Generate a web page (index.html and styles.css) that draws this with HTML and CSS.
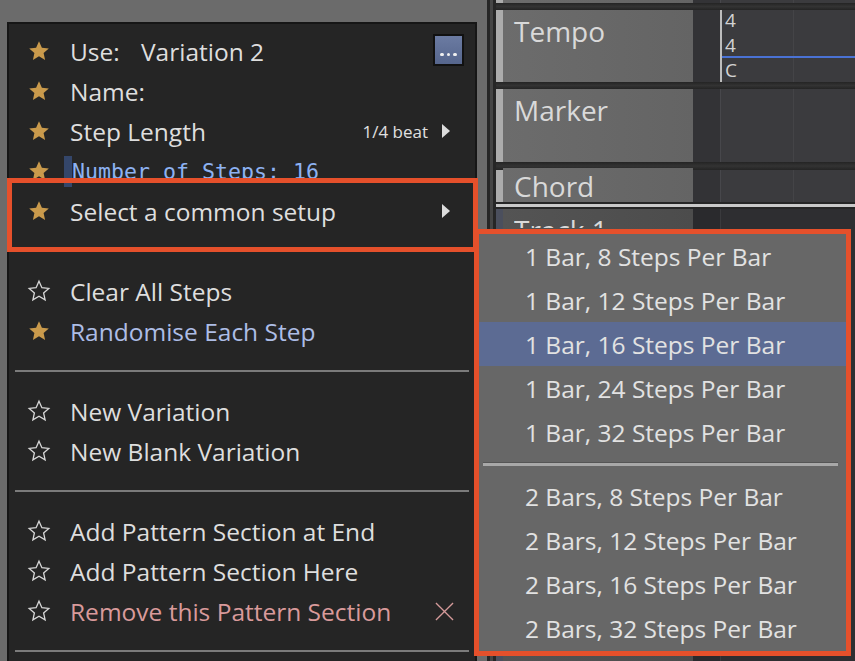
FILE: index.html
```html
<!DOCTYPE html>
<html>
<head>
<meta charset="utf-8">
<link rel="stylesheet" href="styles.css">
</head>
<body>
<svg class="defs" width="0" height="0">
  <symbol id="star" viewBox="0 0 24 24">
    <polygon points="12,2.2 14.9,8.7 21.8,9.4 16.6,14 18.1,20.9 12,17.3 5.9,20.9 7.4,14 2.2,9.4 9.1,8.7"/>
  </symbol>
</svg>

<div class="left">
  <div class="menu">
    <div class="item"><svg class="star full"><use href="#star"/></svg><span class="label-use">Use:</span><span>Variation 2</span><span class="dots-btn"><span class="dot"></span><span class="dot"></span><span class="dot"></span></span></div>
    <div class="item"><svg class="star full"><use href="#star"/></svg><span>Name:</span></div>
    <div class="item"><svg class="star full"><use href="#star"/></svg><span>Step Length</span><span class="value">1/4 beat</span><span class="arrow"></span></div>
    <div class="item"><svg class="star full"><use href="#star"/></svg><span class="cursor"></span><span class="mono">Number of Steps: 16</span></div>
    <div class="item"><svg class="star full"><use href="#star"/></svg><span>Select a common setup</span><span class="arrow push"></span></div>
    <div class="sep"></div>
    <div class="item"><svg class="star empty"><use href="#star"/></svg><span>Clear All Steps</span></div>
    <div class="item accent"><svg class="star full"><use href="#star"/></svg><span>Randomise Each Step</span></div>
    <div class="sep"></div>
    <div class="item"><svg class="star empty"><use href="#star"/></svg><span>New Variation</span></div>
    <div class="item"><svg class="star empty"><use href="#star"/></svg><span>New Blank Variation</span></div>
    <div class="sep"></div>
    <div class="item"><svg class="star empty"><use href="#star"/></svg><span>Add Pattern Section at End</span></div>
    <div class="item"><svg class="star empty"><use href="#star"/></svg><span>Add Pattern Section Here</span></div>
    <div class="item danger"><svg class="star empty"><use href="#star"/></svg><span>Remove this Pattern Section</span><svg class="xicon" viewBox="0 0 20 20"><path d="M1 1 L19 19 M19 1 L1 19"/></svg></div>
    <div class="sep"></div>
  </div>
</div>

<div class="app">
  <div class="gutter"></div>
  <div class="tracks">
    <div class="track stub"><div class="stripe"></div><div class="header"></div><div class="lane"></div></div>
    <div class="hsep"></div>
    <div class="track tempo">
      <div class="stripe"></div>
      <div class="header"><span class="tname">Tempo</span></div>
      <div class="lane"><div class="sig"><div>4</div><div>4</div><div>C</div></div></div>
    </div>
    <div class="hsep"></div>
    <div class="track marker">
      <div class="stripe"></div>
      <div class="header"><span class="tname">Marker</span></div>
      <div class="lane grid"></div>
    </div>
    <div class="hsep wide"></div>
    <div class="track chord">
      <div class="stripe"></div>
      <div class="header"><span class="tname">Chord</span></div>
      <div class="lane grid"></div>
    </div>
    <div class="divider"></div>
    <div class="track t1">
      <div class="stripe"></div>
      <div class="header"><span class="tname clip">Track 1</span></div>
      <div class="lane grid"></div>
    </div>
  </div>
</div>

<div class="submenu">
  <div class="sitem">1 Bar, 8 Steps Per Bar</div>
  <div class="sitem">1 Bar, 12 Steps Per Bar</div>
  <div class="sitem active">1 Bar, 16 Steps Per Bar</div>
  <div class="sitem">1 Bar, 24 Steps Per Bar</div>
  <div class="sitem">1 Bar, 32 Steps Per Bar</div>
  <div class="ssep"></div>
  <div class="sitem">2 Bars, 8 Steps Per Bar</div>
  <div class="sitem">2 Bars, 12 Steps Per Bar</div>
  <div class="sitem">2 Bars, 16 Steps Per Bar</div>
  <div class="sitem">2 Bars, 32 Steps Per Bar</div>
</div>

<div class="mark mark-item"></div>
<div class="mark mark-sub"></div>
</body>
</html>
```

FILE: styles.css
```css
* { box-sizing: border-box; }
html, body { margin: 0; padding: 0; }
body {
  width: 855px;
  height: 661px;
  overflow: hidden;
  position: relative;
  display: flex;
  background: #6b6b6b;
  font-family: "Open Sans", "Noto Sans", sans-serif;
}
.defs { position: absolute; }

/* ---------- left: popup menu ---------- */
.left {
  width: 487px;
  flex: none;
  height: 661px;
  overflow: hidden;
  padding: 22px 0 0 7px;
}
.menu {
  width: 470px;
  height: 700px;
  border: 2px solid #161616;
  background: #252525;
  padding-top: 7px;
}
.item {
  height: 40px;
  display: flex;
  align-items: center;
  padding-left: 18px;
  font-size: 24.5px;
  color: #dedede;
  white-space: nowrap;
}
.star { width: 24px; height: 24px; flex: none; margin-right: 19px; margin-top: -1px; }
.star.full { fill: #c99a4c; }
.star.empty { fill: none; stroke: #d8d8d8; stroke-width: 1.3; stroke-linejoin: miter; }
.label-use { width: 71px; }
.dots-btn {
  margin-left: auto;
  margin-right: 11px;
  width: 31px;
  height: 32px;
  border: 2px solid #111;
  background: linear-gradient(#6b7ba2, #56668d);
  display: flex;
  align-items: flex-end;
  justify-content: center;
  gap: 3px;
  padding-bottom: 8px;
  margin-top: -2px;
}
.dot { width: 3.5px; height: 3.5px; border-radius: 50%; background: #f0f0f0; }
.value { margin-left: auto; font-size: 17px; color: #e0e0e0; }
.arrow {
  width: 0; height: 0;
  border-left: 8px solid #dcdcdc;
  border-top: 7px solid transparent;
  border-bottom: 7px solid transparent;
  margin-left: 14px;
  margin-right: 25px;
}
.arrow.push { margin-left: auto; }
.cursor { width: 8px; height: 31px; background: #34466a; margin-left: -6px; flex: none; }
.mono {
  font-family: "DejaVu Sans Mono", "Liberation Mono", monospace;
  font-size: 21.6px;
  color: #8db2f2;
}
.accent { color: #adbde6; }
.danger { color: #d99a9b; }
.xicon {
  width: 19px; height: 19px;
  margin-left: auto;
  margin-right: 21px;
  stroke: #d49a9a;
  stroke-width: 1.4;
  fill: none;
}
.sep { height: 40px; display: flex; align-items: center; padding: 0 6px; }
.sep::after { content: ""; flex: 1; height: 2px; background: #7b7b7b; }

/* ---------- right: arrangement ---------- */
.app { flex: 1; display: flex; background: #2a2a2a; height: 661px; }
.gutter {
  width: 9px;
  flex: none;
  background: linear-gradient(to right, #262626 0 3px, #454545 3px 6px, #262626 6px);
}
.tracks { flex: 1; display: flex; flex-direction: column; }
.track { display: flex; flex: none; }
.stub { height: 3px; }
.tempo { height: 72px; }
.marker { height: 73px; }
.chord { height: 32px; }
.t1 { flex: 1; }
.hsep { height: 7px; flex: none; background: linear-gradient(#242424, #333 50%, #242424); }
.hsep.wide { height: 8px; }
.divider {
  height: 7px; flex: none;
  background: linear-gradient(#262626 0 2px, #c9c9c9 2px 5px, #262626 5px);
}
.stripe { width: 7px; flex: none; background: #acacac; }
.header {
  width: 190px;
  flex: none;
  background: linear-gradient(to right, #6c6c6c, #646464);
  padding: 3px 0 0 11px;
}
.tname { display: block; font-size: 28px; line-height: 36px; color: #d9d9d9; }
.tname.clip { height: 16px; overflow: hidden; }
.chord .header { padding-top: 0; margin-top: -2px; }
.lane {
  flex: 1;
  background: linear-gradient(to right, #333336 0 27px, #47474b 27px 28px, #3b3b3e 28px 100px, #444447 100px 101px, #3b3b3e 101px);
  display: flex;
  padding-left: 27px;
}
.t1 .stripe { background: #4b4f5d; }
.t1 .header { background: linear-gradient(to right, #545454, #4c4c4c); }
.t1 .lane { background: linear-gradient(to right, #2a2a2d 0 27px, #3a3a3d 27px 28px, #2e2e31 28px); }
.sig {
  flex: 1;
  border-left: 2px solid #bdbdbd;
  padding-left: 3px;
  font-size: 19px;
  line-height: 25px;
  color: #d2d2d2;
  background: linear-gradient(transparent 46px, #4a72d4 46px 48px, transparent 48px);
}
.sig div { height: 25px; }
.sig div:first-child { margin-top: -2px; }

/* ---------- submenu ---------- */
.submenu {
  position: absolute;
  left: 479px;
  top: 234px;
  width: 367px;
  height: 417px;
  background: #676767;
}
.sitem {
  height: 44px;
  display: flex;
  align-items: center;
  padding-left: 46px;
  font-size: 24.5px;
  color: #e2e2e2;
  white-space: nowrap;
}
.sitem.active { background: #5c6b93; }
.ssep { height: 20px; padding: 8px 8px 0 4px; }
.ssep::after { content: ""; display: block; height: 3px; border-top: 1px solid #555; background: #a8a8a8; }

/* ---------- annotation boxes ---------- */
.mark { position: absolute; border: 5px solid #e5502b; }
.mark-item { left: 7px; top: 178px; width: 471px; height: 74px; }
.mark-sub { left: 474px; top: 229px; width: 377px; height: 427px; }
```
